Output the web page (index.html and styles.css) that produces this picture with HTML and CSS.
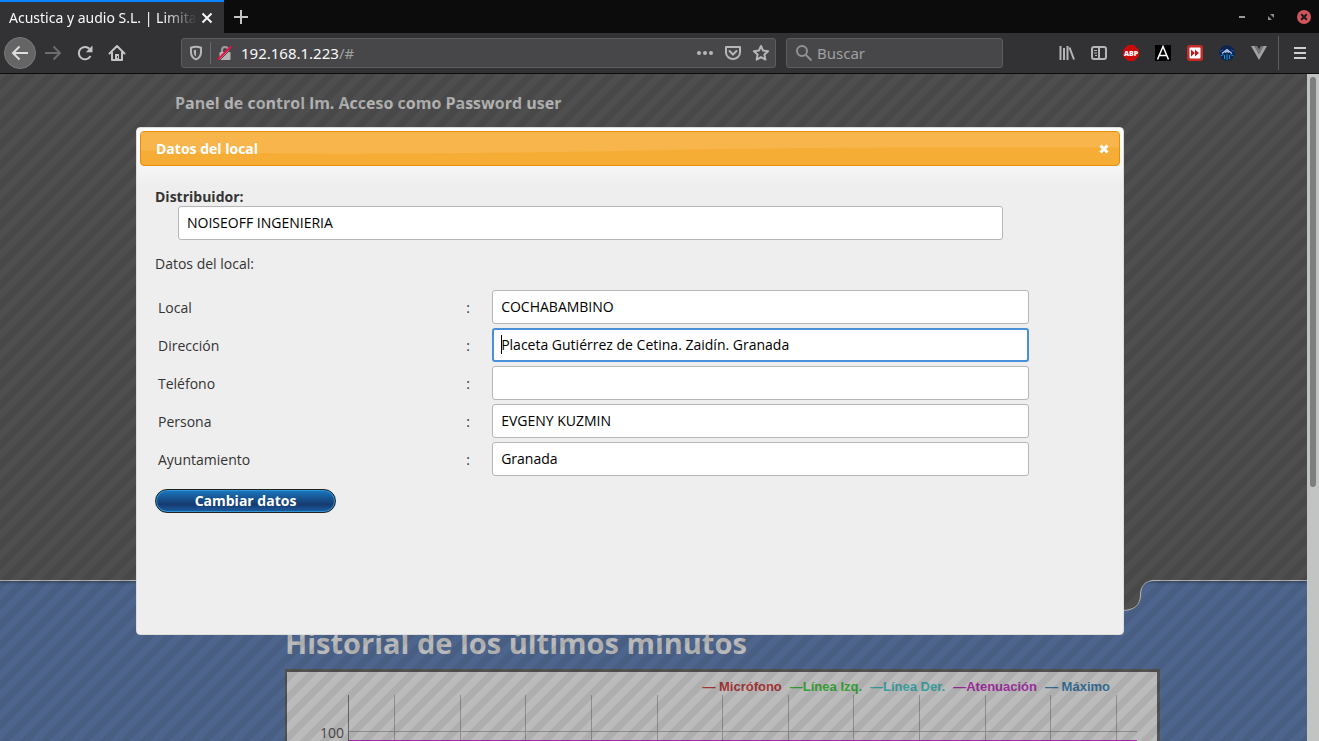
FILE: index.html
```html
<!DOCTYPE html>
<html lang="es">
<head>
<meta charset="utf-8">
<title>Acustica y audio S.L. | Limitador</title>
<link rel="stylesheet" href="styles.css">
</head>
<body>
<div class="tabstrip">
  <div class="tab">
    <span class="tab-title">Acustica y audio S.L. | Limita</span>
    <button class="icon-btn" aria-label="Cerrar pestaña"><svg width="12" height="12" viewBox="0 0 12 12"><path d="M1.500 1.500l9 9M10.500 1.500l-9 9" stroke="#f5f5f5" stroke-width="2"/></svg></button>
  </div>
  <button class="icon-btn new-tab" aria-label="Nueva pestaña"><svg width="16" height="16" viewBox="0 0 16 16"><path d="M8 1v14M1 8h14" stroke="#c4c4c5" stroke-width="2"/></svg></button>
  <div class="window-controls">
    <button class="icon-btn" aria-label="Minimizar"><svg width="8" height="16" viewBox="0 0 8 16"><path d="M1 8h6" stroke="#9a9a9a" stroke-width="2"/></svg></button>
    <button class="icon-btn" aria-label="Restaurar"><svg width="8" height="8" viewBox="0 0 8 8"><path d="M3 1h4v4zM1 3v4h4z" fill="#8e8e8e"/></svg></button>
    <button class="icon-btn" aria-label="Cerrar"><svg width="16" height="16" viewBox="0 0 16 16"><circle cx="8" cy="8" r="7" fill="#cf555a"/><path d="M5.200 5.200l5.600 5.600M10.800 5.200l-5.600 5.600" stroke="#1a1a1a" stroke-width="2"/></svg></button>
  </div>
</div>

<div class="toolbar">
  <button class="icon-btn back" aria-label="Atrás"><svg width="20" height="20" viewBox="0 0 20 20"><path d="M18 10H3M9.500 3.500L3 10l6.500 6.500" fill="none" stroke="#dededf" stroke-width="2"/></svg></button>
  <button class="icon-btn nav" aria-label="Adelante"><svg width="18" height="18" viewBox="0 0 18 18"><path d="M1 9h15M9.500 2.500L16 9l-6.500 6.500" fill="none" stroke="#6c6c6e" stroke-width="2"/></svg></button>
  <button class="icon-btn nav" aria-label="Recargar"><svg width="18" height="18" viewBox="0 0 18 18"><path d="M14.500 12A6.200 6.200 0 1 1 13.500 4.800" fill="none" stroke="#c4c4c5" stroke-width="2"/><path d="M16.500 1.500v6.700H9.800z" fill="#c4c4c5"/></svg></button>
  <button class="icon-btn nav" aria-label="Inicio"><svg width="18" height="18" viewBox="0 0 18 18"><path d="M1.500 9.500L9 2l7.500 7.500M4 8v8h10V8" fill="none" stroke="#c4c4c5" stroke-width="2" stroke-linejoin="round" stroke-linecap="round"/><path d="M7 10h4v6H7z" fill="#c4c4c5"/><path d="M9 12h1v2H9z" fill="#323234"/></svg></button>
  <div class="urlbar">
    <svg width="16" height="16" viewBox="0 0 16 16"><path d="M8 1.800c1.700 0 3.500.4 5 1v4.500c0 3.600-2 5.900-5 7.100-3-1.200-5-3.500-5-7.100V2.800c1.500-.6 3.300-1 5-1z" fill="none" stroke="#b6b6b7" stroke-width="2"/><path d="M8 4.800v6.700c-1.500-1-2.200-2.300-2.200-4.200V5.200z" fill="#b6b6b7"/></svg>
    <span class="url-sep"></span>
    <svg width="16" height="16" viewBox="0 0 16 16"><path d="M5 7V5a3 3 0 0 1 6 0v2" fill="none" stroke="#9c9c9d" stroke-width="2"/><rect x="2.500" y="7" width="11" height="8" rx="1" fill="#b6b6b7"/><path d="M2.500 15.500L15 3" stroke="#47474a" stroke-width="1"/><path d="M1 14.500L14 1.500" stroke="#ef0b45" stroke-width="2"/></svg>
    <span class="url">192.168.1.223<span class="path">/#</span></span>
    <div class="url-actions">
      <svg width="18" height="16" viewBox="0 0 18 16" fill="#b6b6b7"><circle cx="3" cy="8" r="2"/><circle cx="9" cy="8" r="2"/><circle cx="15" cy="8" r="2"/></svg>
      <svg width="18" height="16" viewBox="0 0 18 16"><path d="M2 2h14v5.500a7 6.500 0 0 1-14 0z" fill="none" stroke="#b6b6b7" stroke-width="2" stroke-linejoin="round"/><path d="M5.500 6L9 9.500 12.500 6" fill="none" stroke="#b6b6b7" stroke-width="2" stroke-linecap="round"/></svg>
      <svg width="18" height="18" viewBox="0 0 18 18"><path d="M9 2l2.100 4.600 5 .6-3.700 3.400 1 5L9 13.100l-4.400 2.500 1-5L1.900 7.200l5-.6z" fill="none" stroke="#b6b6b7" stroke-width="2" stroke-linejoin="round"/></svg>
    </div>
  </div>
  <div class="searchbar">
    <svg width="18" height="18" viewBox="0 0 18 18"><circle cx="7" cy="7" r="5" fill="none" stroke="#929293" stroke-width="2"/><path d="M11 11l5.500 5.500" stroke="#929293" stroke-width="2"/></svg>
    <input type="text" placeholder="Buscar" aria-label="Buscar">
  </div>
  <div class="extensions">
    <svg width="16" height="16" viewBox="0 0 16 16"><path d="M1.500 1v14M5 3v12M8.500 1v14M10.500 2.500l4.500 12" stroke="#b6b6b7" stroke-width="2"/></svg>
    <svg width="16" height="16" viewBox="0 0 16 16"><rect x="1" y="2" width="14" height="12" rx="2" fill="none" stroke="#b6b6b7" stroke-width="2"/><path d="M8 2v12" stroke="#b6b6b7" stroke-width="2"/><path d="M3 5.500h3M3 8h3M4 10.500h2" stroke="#b6b6b7"/></svg>
    <svg class="abp" width="16" height="16" viewBox="0 0 16 16"><path d="M5 0h6l5 5v6l-5 5H5l-5-5V5z" fill="#cc0a0a"/><text x="8" y="11" text-anchor="middle">ABP</text></svg>
    <svg width="16" height="16" viewBox="0 0 16 16"><path d="M0 0h16v16H0z"/><path d="M2.500 14.500L8 1.500l5.500 13M4.500 10.500h7" fill="none" stroke="#fff" stroke-width="1.500"/></svg>
    <svg width="16" height="16" viewBox="0 0 16 16"><rect width="16" height="16" rx="3" fill="#c52c29"/><rect x="2.500" y="2.500" width="11" height="11" rx="1" fill="#fff"/><path d="M4 4.500L8 8l-4 3.500zM8 4.500L12 8l-4 3.500z" fill="#b51d1b"/></svg>
    <svg width="16" height="16" viewBox="0 0 16 16"><circle cx="8" cy="8" r="7.800" fill="#0d2450"/><path d="M1.500 11l3-1.500M14.500 11l-3-1.500M8 9v6M5.500 10v4M10.500 10v4" stroke="#1598d0"/><path d="M1 6.500l3-2M15 6.500l-3-2" stroke="#1c58b8"/><path d="M3 8.500L8 4.500l5 4M6 7.500l2-1 2 1" fill="none" stroke="#b4c8f5" stroke-width="1.200"/></svg>
    <svg width="16" height="16" viewBox="0 0 16 16"><path d="M0 1h3.500L8 9l4.500-8H16L8 15z" fill="#a2a2a2"/><path d="M3.500 1H6l2 3.500L10 1h2.500L8 9z" fill="#777"/></svg>
  </div>
  <button class="icon-btn menu" aria-label="Menú"><svg width="12" height="14" viewBox="0 0 12 14"><path d="M0 2h12M0 7h12M0 12h12" stroke="#d0d0d1" stroke-width="2"/></svg></button>
</div>

<div class="viewport">
  <div class="page">
    <header class="hero">
      <p class="hero-title">Panel de control lm. Acceso como Password user</p>
      <svg class="hero-edge" width="60" height="32" viewBox="0 0 60 32"><path d="M0 0H33C23 .5 18.500 6 18.500 15C18.500 25 12 30.500 0 30.500z" fill="#4c4c4c"/><path d="M33 .5C23 .5 18.500 6 18.500 15C18.500 25 12 30.500 0 30.500" fill="none" stroke="#b5b5b5"/></svg>
    </header>
    <main class="history">
      <h1>Historial de los últimos minutos</h1>
      <section class="chart">
        <div class="legend">
          <span class="mic">— Micrófono</span>
          <span class="left">—Línea Izq.</span>
          <span class="right">—Línea Der.</span>
          <span class="att">—Atenuación</span>
          <span class="max">— Máximo</span>
        </div>
        <div class="plot">
          <span class="tick">100</span>
          <svg class="grid" viewBox="0 0 789 60" preserveAspectRatio="none" shape-rendering="crispEdges">
            <path d="M46.500 0v60M112.500 0v60M177.500 0v60M243.500 0v60M309.500 0v60M374.500 0v60M440.500 0v60M505.500 0v60M571.500 0v60M637.500 0v60M702.500 0v60M768.500 0v60M0 36.500h789" stroke="#8d8d8d"/>
            <path d="M.5 0v60" stroke="#666"/>
            <path d="M0 46h789" stroke="#9b2d9b" stroke-width="2"/>
          </svg>
        </div>
      </section>
    </main>
    <div class="overlay"></div>
    <div class="dialog" role="dialog" aria-labelledby="dialog-title">
      <div class="dialog-bar">
        <svg class="gloss" viewBox="0 0 980 34" preserveAspectRatio="none"><path d="M0 0h980v16C820 16 700 15 500 19S150 24 0 19z" fill="#f7b54b"/></svg>
        <h2 id="dialog-title">Datos del local</h2>
        <button class="icon-btn" aria-label="Cerrar"><svg width="10" height="10" viewBox="0 0 10 10"><path d="M1.500 1.500l7 7M8.500 1.500l-7 7" stroke="#fff" stroke-width="3"/></svg></button>
      </div>
      <form class="dialog-body">
        <label class="strong" for="dist">Distribuidor:</label>
        <div class="indent"><input class="field" id="dist" type="text" value="NOISEOFF INGENIERIA"></div>
        <p class="caption">Datos del local:</p>
        <table class="data">
          <tr><td><label for="local">Local</label></td><td>:</td><td><input class="field" id="local" type="text" value="COCHABAMBINO"></td></tr>
          <tr><td><label for="dir">Dirección</label></td><td>:</td><td><div class="focus-wrap"><input class="field focused" id="dir" type="text" value="Placeta Gutiérrez de Cetina. Zaidín. Granada"><span class="caret"></span></div></td></tr>
          <tr><td><label for="tel">Teléfono</label></td><td>:</td><td><input class="field" id="tel" type="text" value=""></td></tr>
          <tr><td><label for="per">Persona</label></td><td>:</td><td><input class="field" id="per" type="text" value="EVGENY KUZMIN"></td></tr>
          <tr><td><label for="ayu">Ayuntamiento</label></td><td>:</td><td><input class="field" id="ayu" type="text" value="Granada"></td></tr>
        </table>
        <button class="submit" type="button">Cambiar datos</button>
      </form>
    </div>
  </div>
  <div class="scrollbar"><div class="thumb"></div></div>
</div>
</body>
</html>
```
FILE: styles.css
```css
* { box-sizing: border-box; }
html, body { height: 100%; }
body {
  margin: 0;
  display: flex;
  flex-direction: column;
  overflow: hidden;
  background: #0c0c0d;
  font-family: "Open Sans", "Noto Sans", sans-serif;
  font-size: 14px;
}
svg { display: block; flex: none; }
input, button { font: inherit; }
.icon-btn {
  display: flex;
  align-items: center;
  justify-content: center;
  flex: none;
  padding: 0;
  border: 0;
  background: none;
}

/* Browser tabs */
.tabstrip { display: flex; flex: none; height: 33px; }
.tab {
  display: flex;
  align-items: center;
  justify-content: space-between;
  width: 224px;
  padding: 0 11px 0 9px;
  border-top: 2px solid #0a84ff;
  background: #323234;
  color: #f9f9fa;
}
.tab-title {
  font-family: "Noto Sans", sans-serif;
  white-space: nowrap;
  mask-image: linear-gradient(to left, transparent, #000 34px);
}
.new-tab { width: 34px; }
.window-controls {
  display: flex;
  align-items: center;
  gap: 21px;
  margin-left: auto;
  padding-right: 7px;
}

/* Browser toolbar */
.toolbar {
  display: flex;
  align-items: center;
  flex: none;
  height: 41px;
  padding-left: 4px;
  border-bottom: 1px solid #0c0c0d;
  background: #323234;
  font-family: "Noto Sans", sans-serif;
  font-size: 15px;
}
.back {
  width: 32px;
  height: 32px;
  margin-right: 1px;
  border: 1px solid #7a7a7b;
  border-radius: 50%;
  background: #656566;
}
.nav { width: 32px; height: 32px; }
.urlbar, .searchbar {
  display: flex;
  align-items: center;
  height: 30px;
  border: 1px solid #5d5d5f;
  border-radius: 3px;
  background: #474749;
}
.urlbar { flex: 1; margin-left: 48px; padding: 0 5px 0 6px; }
.url-sep { width: 1px; height: 22px; margin: 0 6px; background: #67696c; }
.url { margin-left: 8px; color: #f9f9fa; }
.path { color: #a0a0a1; }
.url-actions { display: flex; align-items: center; gap: 10px; margin-left: auto; }
.searchbar { width: 217px; margin: 0 56px 0 10px; padding: 0 8px; gap: 4px; }
.searchbar input { width: 100%; padding: 0; border: 0; outline: 0; background: none; color: #f9f9fa; }
.searchbar input::placeholder { color: #a0a0a1; opacity: 1; }
.extensions { display: flex; gap: 16px; }
.abp text { fill: #fff; font-family: "Open Sans", sans-serif; font-size: 7px; font-weight: 800; }
.menu { width: 41px; height: 34px; margin-left: 11px; padding-left: 2px; border-left: 1px solid #5d5d5f; }

/* Web page */
.viewport { display: flex; flex: 1; min-height: 0; }
.page { position: relative; flex: 1; overflow: hidden; background: #4d658c; }
.hero {
  position: relative;
  height: 507px;
  padding: 17px 175px;
  border-bottom: 1px solid #b5b5b5;
  background: #4e4e4e;
  box-shadow: 0 1px 3px rgba(0, 0, 0, .4);
}
.hero-title { margin: 0; color: #b4b4b4; font-size: 16px; font-weight: 700; line-height: 24px; }
.hero-edge { position: absolute; top: 506px; right: 125px; }
.hero-edge path:first-child { fill: #4e4e4e; }
.history { padding: 41px 147px 0 285px; }
.history h1 { margin: 0; color: #bababa; font-size: 29px; font-weight: 700; line-height: 42px; }
.chart { margin-top: 5px; height: 400px; border: 3px solid #525252; border-left-width: 2px; background: #bbb; }
.legend {
  display: flex;
  justify-content: flex-end;
  gap: 8px;
  padding: 6px 47px 0 0;
  font: bold 13px/17px "Liberation Sans", Arial, sans-serif;
}
.mic { color: #a33535; }
.left { color: #36a036; }
.right { color: #3a9ea0; }
.att { color: #9b2d9b; }
.max { color: #336b91; }
.plot { display: grid; grid-template-columns: 61px 1fr; padding-right: 20px; }
.tick { padding: 28px 4px 0 0; color: #484848; line-height: 20px; text-align: right; }
.grid { width: 100%; height: 60px; }
.overlay {
  position: absolute;
  inset: 0;
  background: linear-gradient(135deg, rgba(0, 0, 0, .07) 25%, transparent 25% 50%, rgba(0, 0, 0, .07) 50% 75%, transparent 75%) 7px 0 / 20px 20px;
}
.scrollbar { width: 12px; padding: 3px; background: #c2c4c3; }
.thumb { height: 410px; border-radius: 3px; background: #7a7e7f; }

/* Dialog */
.dialog {
  position: absolute;
  top: 53px;
  left: 136px;
  right: 183px;
  min-height: 508px;
  padding: 3px;
  border: 1px solid #ddd;
  border-radius: 4px;
  background: linear-gradient(#fff, #f6f6f6 38px, #eee 58px);
  color: #333;
}
.dialog-bar {
  position: relative;
  display: flex;
  align-items: center;
  justify-content: space-between;
  height: 35px;
  padding: 0 10px 0 15px;
  border: 1px solid #e78f08;
  border-radius: 4px;
  overflow: hidden;
  background: #f6ad35;
}
.gloss { position: absolute; inset: 0; width: 100%; height: 100%; }
.dialog-bar h2 { position: relative; margin: 0; color: #fff; font-size: 14px; font-weight: 700; }
.dialog-bar .icon-btn { position: relative; }
.dialog-body { padding: 21px 88px 20px 15px; line-height: 19px; }
.strong { display: block; font-weight: 700; }
.indent { padding: 0 29px 0 23px; }
.caption { margin: 14px 0; }
.field {
  display: block;
  width: 100%;
  height: 34px;
  padding: 0 8px 2px;
  border: 1px solid #b6b6b6;
  border-radius: 3px;
  outline: 0;
  background: #fff;
  color: #000;
}
.focused { padding: 0 7px 2px; border: 2px solid #4a90d9; }
.focus-wrap { position: relative; }
.caret { position: absolute; left: 9px; top: 7px; width: 1px; height: 19px; background: #000; }
.data { width: 100%; border-spacing: 2px; table-layout: fixed; }
.data td { padding: 1px; }
.data td:nth-child(1) { width: 35%; padding-right: 0; }
.data td:nth-child(2) { width: 26px; padding-left: 3px; }
.submit {
  display: block;
  width: 181px;
  height: 24px;
  margin-top: 10px;
  padding: 0;
  border: 1px solid #222;
  border-radius: 12px;
  background: linear-gradient(#1a78c0, #163a70 65%, #1a5fa5);
  box-shadow: inset 0 0 0 1px #2f94d4;
  color: #fff;
  font-weight: 700;
  line-height: 22px;
}
```
